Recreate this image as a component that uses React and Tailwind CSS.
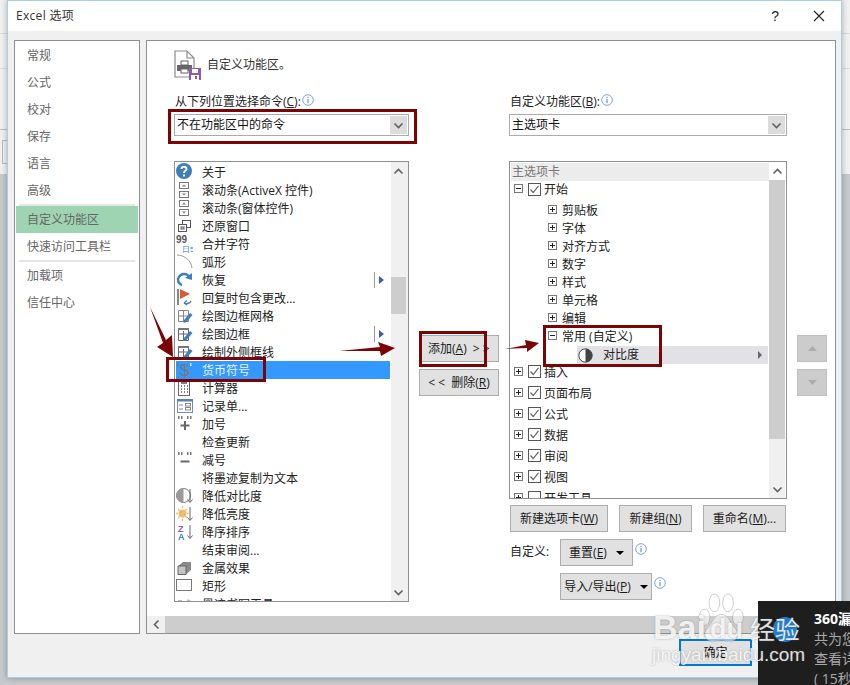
import React from 'react';

const Svg = ({ children, w = 17, h = 18 }) => (
    <svg width={w} height={h} viewBox={`0 0 ${w} ${h}`} className="block shrink-0">{children}</svg>
);

const Spin = () => (
    <g fill="none" stroke="#777">
        <rect x="3.5" y="1.5" width="9" height="6" />
        <rect x="3.5" y="10.5" width="9" height="6" />
        <path d="M6 5.5 L8 3.5 L10 5.5 Z M6 12.5 L8 14.5 L10 12.5 Z" fill="#777" stroke="none" />
    </g>
);

const Pencil = () => <path d="M8 13 L14 6 L16.5 8 L10.5 15 L7.5 16 Z" fill="#3f7fbf" />;

const Quotes = () => (
    <g fill="#777">
        <rect x="2" y="1" width="1.5" height="3" /><rect x="5" y="1" width="1.5" height="3" />
        <rect x="11" y="1" width="1.5" height="3" /><rect x="14" y="1" width="1.5" height="3" />
    </g>
);

const DownArrow = () => <path d="M14 2 V15 M11.5 12.5 L14 15.5 L16.5 12.5" fill="none" stroke="#666" />;

const icons = {
    about: <Svg><circle cx="8" cy="8" r="8" fill="#3f7fb8" /><path d="M5.5 6 C5.5 3 10.5 3 10.5 6 C10.5 8 8 7.5 8 10" fill="none" stroke="#fff" strokeWidth="2" /><rect x="7" y="11.5" width="2" height="2" fill="#fff" /></Svg>,
    spin: <Svg><Spin /></Svg>,
    restore: <Svg><g fill="none" stroke="#555"><rect x="6.5" y="3.5" width="8" height="7" /><rect x="2.5" y="7.5" width="8" height="7" fill="#fff" /><rect x="5" y="10" width="3" height="2" /></g></Svg>,
    merge: <Svg><text x="0" y="8" fontSize="10" fill="#555" fontFamily="Liberation Sans" fontWeight="700">99</text><text x="6" y="17" fontSize="8" fill="#3f7fb8" fontFamily="Liberation Sans">日5</text></Svg>,
    arc: <Svg><path d="M1 2 C8 2 15 7 16 15" fill="none" stroke="#999" /></Svg>,
    redo: <Svg><path d="M14 7 C11 1 4 2 2 8 C2 11 3 13 6 14" fill="none" stroke="#3f7fb8" strokeWidth="2.4" /><path d="M9 7 L16 9 L16 2 Z" fill="#3f7fb8" /></Svg>,
    flag: <Svg><rect x="1" y="0" width="2" height="16" fill="#888" /><path d="M4 0 L14 5 L4 10 Z" fill="#d8593c" /><path d="M15 12 C14 15 10 15 8 14 M8 14 L11 11.5 M8 14 L11 16" fill="none" stroke="#3f7fb8" strokeWidth="1.3" /></Svg>,
    grid: <Svg><path d="M2.5 3.5 H12.5 V14.5 H2.5 Z M7.5 3.5 V14.5 M2.5 9 H12.5" fill="none" stroke="#888" /><Pencil /></Svg>,
    frame: <Svg><path d="M2.5 3.5 H12.5 V15.5 H2.5 Z M7.5 6 V15.5 M2.5 9 H12.5" fill="none" stroke="#666" /><rect x="2" y="3" width="11" height="2" fill="#777" /><Pencil /></Svg>,
    dollar: <Svg><text x="4" y="15" fontSize="17" fill="#777" fontFamily="Liberation Sans">$</text><rect x="1" y="2" width="1.5" height="3" fill="#777" /><rect x="14" y="2" width="1.5" height="3" fill="#cfe4fb" /></Svg>,
    calc: <Svg><rect x="2.5" y="1.5" width="11" height="15" fill="none" stroke="#666" /><path d="M5 4H11M5 7H6M8 7H9M11 7H12M5 10H6M8 10H9M11 10H12M5 13H6M8 13H9M11 13H12" stroke="#555" strokeWidth="1.5" /></Svg>,
    form: <Svg><rect x="1.5" y="2.5" width="15" height="13" fill="#fff" stroke="#7a8aa0" /><rect x="1" y="2" width="16" height="2.5" fill="#5b7fb0" /><path d="M3 8H7M3 12H7" stroke="#888" /><rect x="9.5" y="6.5" width="5" height="2.5" fill="none" stroke="#888" /><rect x="9.5" y="10.5" width="5" height="2.5" fill="none" stroke="#888" /></Svg>,
    plus: <Svg><Quotes /><path d="M9 6 V15 M4.5 10.5 H13.5" stroke="#666" strokeWidth="2" /></Svg>,
    minus: <Svg><Quotes /><path d="M4.5 10.5 H13.5" stroke="#666" strokeWidth="2" /></Svg>,
    contrast: <Svg><circle cx="7.5" cy="8.5" r="7" fill="#fff" stroke="#777" /><path d="M7.5 1.5 A7 7 0 0 0 7.5 15.5 Z" fill="#9a9a9a" /><DownArrow /></Svg>,
    bright: <Svg><circle cx="6.5" cy="8.5" r="4" fill="#eebb70" /><path d="M6.5 1V3M6.5 14V16M0 8.5H2M11 8.5H12.5M2 4L3.5 5.5M11 4L9.5 5.5M2 13L3.5 11.5M11 13L9.5 11.5" stroke="#eebb70" strokeWidth="1.3" /><DownArrow /></Svg>,
    sort: <Svg><text x="2" y="8.5" fontSize="9" fill="#8a5cb0" fontFamily="Liberation Sans" fontWeight="700">Z</text><text x="2" y="17" fontSize="9" fill="#3f7fb8" fontFamily="Liberation Sans" fontWeight="700">A</text><DownArrow /></Svg>,
    metal: <Svg><path d="M2 7 L7 3 H15 V11 L10 15.5 H2 Z" fill="#8a8a8a" /><path d="M2 7 H10 V15.5 H2 Z" fill="#c4c4c4" stroke="#666" /></Svg>,
    rect: <Svg><rect x="0.5" y="2.5" width="15" height="11" fill="#fff" stroke="#777" /></Svg>,
    pen: <Svg><path d="M4 16 L12 4 L15 6 L8 16 Z" fill="#bbb" /><path d="M2 6 H6" stroke="#d8593c" /></Svg>,
};

const commands = [
    ['关于', 'about'], ['滚动条(ActiveX 控件)', 'spin'], ['滚动条(窗体控件)', 'spin'], ['还原窗口', 'restore'],
    ['合并字符', 'merge'], ['弧形', 'arc'], ['恢复', 'redo', true], ['回复时包含更改...', 'flag'],
    ['绘图边框网格', 'grid'], ['绘图边框', 'frame', true], ['绘制外侧框线', 'frame'], ['货币符号', 'dollar'],
    ['计算器', 'calc'], ['记录单...', 'form'], ['加号', 'plus'], ['检查更新'], ['减号', 'minus'],
    ['将墨迹复制为文本'], ['降低对比度', 'contrast'], ['降低亮度', 'bright'], ['降序排序', 'sort'],
    ['结束审阅...'], ['金属效果', 'metal'], ['矩形', 'rect'], ['墨迹书写工具', 'pen'],
];

const topItems = ['常规', '公式', '校对', '保存', '语言', '高级'];
const subGroups = ['剪贴板', '字体', '对齐方式', '数字', '样式', '单元格', '编辑'];
const tabs = ['插入', '页面布局', '公式', '数据', '审阅', '视图'];

const Chevron = ({ up }) => (
    <svg width="11" height="7" viewBox="0 0 11 7" className="block">
        <path d={up ? 'M1.5 5.5 L5.5 1.5 L9.5 5.5' : 'M1.5 1.5 L5.5 5.5 L9.5 1.5'} fill="none" stroke="#606060" strokeWidth="1.6" />
    </svg>
);

const Info = () => (
    <svg width="12" height="12" viewBox="0 0 12 12" className="block shrink-0">
        <circle cx="6" cy="6" r="5.3" fill="#fff" stroke="#7ba4dc" />
        <path d="M6 5 V9.2 M6 2.8 V4" stroke="#4f7fc4" />
    </svg>
);

const Expander = ({ open }) => (
    <svg width="9" height="9" viewBox="0 0 9 9" className="block shrink-0 mb-[3px]">
        <rect x="0.5" y="0.5" width="8" height="8" fill="#fff" stroke="#777" />
        <path d={open ? 'M2 4.5H7' : 'M2 4.5H7M4.5 2V7'} stroke="#222" />
    </svg>
);

const Check = ({ on = true }) => (
    <svg width="13" height="13" viewBox="0 0 13 13" className="block shrink-0 mb-[2px]">
        <rect x="0.5" y="0.5" width="12" height="12" fill="#fff" stroke="#555" />
        {on && <path d="M2.5 6.5 L5.2 9.5 L10.5 2.8" fill="none" stroke="#666" strokeWidth="1.2" />}
    </svg>
);

const Caret = () => <span className="inline-block ml-[9px] w-0 h-0 border-x-[4px] border-x-transparent border-t-[4px] border-t-black align-middle" />;

const Btn = ({ className = '', children }) => (
    <div className={`h-[27px] flex items-center justify-center bg-[#e1e1e1] border border-[#adadad] text-[#1a1a1a] whitespace-nowrap ${className}`}>{children}</div>
);

const Select = ({ value }) => (
    <div className="h-[22px] flex border border-[#ababab] bg-white">
        <div className="flex-1 pl-[2px] leading-[19px] text-[#111]">{value}</div>
        <div className="w-[19px] bg-[#dcdcdc] border border-white flex items-center justify-center"><Chevron /></div>
    </div>
);

const MoveBtn = ({ d }) => (
    <div className="h-[27px] flex items-center justify-center bg-[#cccccc] border border-[#c0c0c0]">
        <svg width="9" height="5" viewBox="0 0 9 5"><path d={d} fill="#ababab" /></svg>
    </div>
);

function CommandList() {
    return (
        <div className="h-[441px] flex border border-[#8c8f94] bg-white overflow-hidden">
            <div className="w-[216px] pt-[1px]">
                {commands.map(([label, icon, more]) => {
                    const selected = label === '货币符号';
                    return (
                        <div key={label} className={`h-[18px] flex items-center ml-px w-[214px] text-[#222] ${selected ? 'bg-[#3399ff] text-[#e6f2ff]' : ''}`}>
                            <div className="w-[17px] shrink-0">{icons[icon]}</div>
                            <span className="ml-[9px] flex-1 whitespace-nowrap pt-[2px]">{label}</span>
                            {more && (
                                <div className="flex items-center h-[16px] mr-[3px] pr-[3px] border-l border-[#999] pl-[4px]">
                                    <span className="w-0 h-0 border-y-[4px] border-y-transparent border-l-[5px] border-l-[#3f5f9f]" />
                                </div>
                            )}
                        </div>
                    );
                })}
            </div>
            <div className="flex-1 bg-[#f0f0f0] flex flex-col">
                <div className="h-[18px] w-[15px] flex items-center justify-center"><Chevron up /></div>
                <div className="h-[97px]" />
                <div className="h-[37px] w-[15px] bg-[#cdcdcd]" />
                <div className="flex-1" />
                <div className="h-[18px] w-[15px] flex items-center justify-center"><Chevron /></div>
            </div>
        </div>
    );
}

function RibbonTree() {
    return (
        <div className="h-[338px] flex border border-[#8c8f94] bg-white overflow-hidden">
            <div className="w-[259px] pt-px overflow-hidden">
                <div className="h-[18px] ml-px bg-[#ececec] text-[#777] leading-[18px] pl-px">主选项卡</div>
                <div className="h-[18px] flex items-center pl-[4px]">
                    <Expander open />
                    <div className="ml-[5px]"><Check /></div>
                    <span className="ml-[3px]">开始</span>
                </div>
                <div className="mt-[3px]">
                    {subGroups.map(name => (
                        <div key={name} className="h-[18px] flex items-center pl-[38px]">
                            <Expander />
                            <span className="ml-[5px]">{name}</span>
                        </div>
                    ))}
                    <div className="h-[18px] flex items-center pl-[38px]">
                        <Expander open />
                        <span className="ml-[5px]">常用 (自定义)</span>
                    </div>
                    <div className="h-[18px] ml-[67px] w-[191px] bg-[#e1e1e6] flex items-center">
                        <svg width="15" height="15" viewBox="0 0 15 15" className="ml-px shrink-0">
                            <circle cx="7.5" cy="7.5" r="6.7" fill="#fff" stroke="#444" />
                            <path d="M7.5 .8 A6.7 6.7 0 0 1 7.5 14.2 Z" fill="#444" />
                        </svg>
                        <span className="ml-[10px] flex-1">对比度</span>
                        <span className="mr-[6px] w-0 h-0 border-y-[4px] border-y-transparent border-l-[4px] border-l-[#666]" />
                    </div>
                </div>
                <div className="-mt-[2px]">
                    {tabs.map(name => (
                        <div key={name} className="h-[21px] flex items-center pl-[4px]">
                            <Expander />
                            <div className="ml-[5px]"><Check /></div>
                            <span className="ml-[3px]">{name}</span>
                        </div>
                    ))}
                    <div className="h-[21px] flex items-center pl-[4px]">
                        <Expander />
                        <div className="ml-[5px]"><Check on={false} /></div>
                        <span className="ml-[3px]">开发工具</span>
                    </div>
                </div>
            </div>
            <div className="flex-1 flex flex-col">
                <div className="h-[18px] w-[16px] flex items-center justify-center"><Chevron up /></div>
                <div className="h-[259px] w-[16px] bg-[#cdcdcd]" />
                <div className="flex-1 w-[16px] bg-[#f0f0f0] flex items-end justify-center pb-[5px]"><Chevron /></div>
            </div>
        </div>
    );
}

// red marks the author drew on top of the screenshot
function Annotations() {
    const box = 'absolute border-[3px] border-[#7b0505]';
    return (
        <>
            <div className={`${box} left-[168px] top-[109px] w-[249px] h-[35px]`} />
            <div className={`${box} left-[166px] top-[357px] w-[100px] h-[25px]`} />
            <div className={`${box} left-[419px] top-[331px] w-[68px] h-[36px]`} />
            <div className={`${box} left-[543px] top-[325px] w-[119px] h-[42px]`} />
            <svg className="absolute left-0 top-0" width="850" height="685" viewBox="0 0 850 685">
                <path d="M150 307 L166 340 L172 335 L173 357 L157 347 L163 343 Z" fill="#7b0505" />
                <path d="M339 351 L380 347 L378 342 L395 348 L381 356 L380 351 Z" fill="#7b0505" />
                <path d="M505 349 L526 345 L525 340 L539 343 L527 352 L527 348 Z" fill="#7b0505" />
            </svg>
        </>
    );
}

function Toast() {
    return (
        <div className="absolute left-[758px] top-[601px] w-[92px] h-[84px] bg-[#1e1e1e] pl-[56px] pt-[8px] overflow-hidden text-[14px] leading-[20px] whitespace-nowrap text-[#a8a8a8]">
            <div className="font-bold text-white">360漏洞修复</div>
            <div>共为您修复了</div>
            <div>查看详情</div>
            <div>( 15秒 )</div>
        </div>
    );
}

function Watermark() {
    const wm = '[text-shadow:0_0_2px_rgba(90,90,90,0.5)] text-white/85';
    return (
        <div className="absolute left-[648px] top-[590px] w-[160px] h-[80px] overflow-hidden">
            <svg className="absolute left-[49px] top-[3px]" width="50" height="52" viewBox="0 0 66 58" preserveAspectRatio="none">
                <g fill="rgba(255,255,255,0.55)" stroke="rgba(130,130,130,0.45)">
                    <ellipse cx="10" cy="27" rx="7" ry="9" />
                    <ellipse cx="23" cy="11" rx="7" ry="10" />
                    <ellipse cx="41" cy="11" rx="7" ry="10" />
                    <ellipse cx="54" cy="27" rx="7" ry="9" />
                    <path d="M32 24 C22 24 20 34 13 40 C6 48 14 56 24 54 C30 53 35 53 41 54 C51 56 58 47 51 40 C44 34 42 24 32 24 Z" />
                </g>
            </svg>
            <span className="absolute left-[125px] top-[27px] w-[24px] h-[25px] rounded-full bg-[#1e7fd6]" />
            <span className={`absolute left-[5px] top-[17px] text-[34px] leading-[40px] font-bold font-['Liberation_Sans',sans-serif] ${wm}`}>Bai</span>
            <span className={`absolute left-[62px] top-[23px] text-[27px] leading-[32px] font-bold font-['Liberation_Sans',sans-serif] ${wm}`}>du</span>
            <span className={`absolute left-[102px] top-[22px] text-[25px] leading-[32px] font-['Noto_Sans_CJK_SC',sans-serif] ${wm}`}>经验</span>
            <span className={`absolute left-[4px] top-[53px] text-[19px] leading-[24px] font-['Liberation_Sans',sans-serif] ${wm}`}>jingyan.baidu.com</span>
        </div>
    );
}

export default function App() {
    return (
        <div className="relative w-[850px] h-[685px] overflow-hidden bg-[#c6c9cd] text-[12px] text-[#222] font-['Open_Sans','Noto_Sans_CJK_SC',sans-serif]">
            {/* the Excel sheet behind the dialog */}
            <div className="absolute left-0 right-0 top-0 h-[174px] bg-[#f1f1f1]">
                <div className="absolute left-0 right-0 top-[33px] h-px bg-[#dcdcdc]" />
                <div className="absolute left-0 right-0 top-[68px] h-px bg-[#dcdcdc]" />
                <div className="absolute left-0 right-0 top-[129px] h-px bg-[#bdbdbd]" />
                <div className="absolute left-[2px] top-[140px] w-[10px] h-[24px] border border-[#bbb]" />
            </div>

            <div className="relative ml-[7px] w-[835px] h-[678px] flex flex-col border border-[#a9cdea] bg-[#f0f0f0] shadow-[0_0_6px_rgba(0,0,0,0.3)]">
                <div className="h-[30px] shrink-0 bg-white flex items-center pl-[8px] pr-[16px] text-[#333]">
                    <span className="flex-1 text-[12px] tracking-[0.3px]">Excel 选项</span>
                    <span className="text-[14px] text-[#222] mr-[34px] font-['Liberation_Sans',sans-serif]">?</span>
                    <svg width="12" height="12" viewBox="0 0 12 12"><path d="M1 1 L11 11 M11 1 L1 11" stroke="#222" strokeWidth="1.1" /></svg>
                </div>

                <div className="flex gap-[6px] pl-[6px] pt-[9px]">
                    <div className="w-[126px] h-[594px] border border-[#8c8f94] bg-white pt-px text-[#666]">
                        {topItems.map(item => <div key={item} className="h-[27px] pl-[12px] leading-[27px]">{item}</div>)}
                        <div className="h-[2px] mx-[4px] bg-[#e6e6e6]" />
                        <div className="h-[27px] mx-px pl-[11px] leading-[27px] bg-[#9fd4b2]">自定义功能区</div>
                        <div className="h-[27px] pl-[12px] leading-[27px]">快速访问工具栏</div>
                        <div className="h-[2px] mx-[4px] bg-[#e6e6e6]" />
                        <div className="h-[27px] pl-[12px] leading-[27px]">加载项</div>
                        <div className="h-[27px] pl-[12px] leading-[27px]">信任中心</div>
                    </div>

                    <div className="w-[690px] h-[594px] border border-[#8c8f94] bg-white flex flex-col">
                        <div className="flex-1 pl-[27px] pt-[9px] overflow-hidden">
                            <div className="h-[30px] flex items-center">
                                <svg width="28" height="30" viewBox="0 0 28 30" className="block shrink-0">
                                    <path d="M1 1 H13 L20 8 V27 H1 Z" fill="#fff" stroke="#8a8a8a" strokeWidth="1.2" />
                                    <path d="M13 1 V8 H20" fill="none" stroke="#8a8a8a" strokeWidth="1.2" />
                                    <rect x="7" y="11" width="7" height="4" fill="#fff" stroke="#666" />
                                    <rect x="3" y="15" width="15" height="6" fill="#666" />
                                    <rect x="7" y="19" width="7" height="4" fill="#fff" stroke="#666" />
                                    <rect x="15" y="18" width="12" height="12" fill="#8a5cb0" />
                                    <rect x="18" y="19" width="6" height="4" fill="#fff" />
                                    <rect x="17" y="25" width="8" height="5" fill="#fff" />
                                    <rect x="21" y="26" width="2" height="3" fill="#8a5cb0" />
                                </svg>
                                <span className="ml-[5px] mb-[1px] text-[#333]">自定义功能区。</span>
                            </div>

                            <div className="flex mt-[12px]">
                                <div className="w-[235px]">
                                    <div className="h-[22px] flex items-start leading-[19px] pl-px">
                                        <span>从下列位置选择命令(<u>C</u>):</span>
                                        <div className="ml-px mt-[2px]"><Info /></div>
                                    </div>
                                    <Select value="不在功能区中的命令" />
                                    <div className="mt-[25px]"><CommandList /></div>
                                </div>

                                <div className="w-[80px] ml-[10px] pt-[243px] flex flex-col gap-[7px]">
                                    <Btn className="justify-start pl-[8px]"><span>添加(<u>A</u>)</span><span className="ml-[6px]">&gt; &gt;</span></Btn>
                                    <Btn><span>&lt; &lt;&nbsp; 删除(<u>R</u>)</span></Btn>
                                </div>

                                <div className="w-[278px] ml-[10px]">
                                    <div className="h-[22px] flex items-start leading-[19px] pl-px">
                                        <span>自定义功能区(<u>B</u>):</span>
                                        <div className="ml-px mt-[2px]"><Info /></div>
                                    </div>
                                    <Select value="主选项卡" />
                                    <div className="mt-[25px]"><RibbonTree /></div>
                                    <div className="flex gap-[11px] pl-px mt-[6px]">
                                        <Btn className="w-[98px]"><span>新建选项卡(<u>W</u>)</span></Btn>
                                        <Btn className="w-[73px]"><span>新建组(<u>N</u>)</span></Btn>
                                        <Btn className="w-[83px]"><span>重命名(<u>M</u>)...</span></Btn>
                                    </div>
                                    <div className="flex pl-px mt-[7px]">
                                        <span className="w-[50px] leading-[25px]">自定义:</span>
                                        <Btn className="w-[73px]"><span>重置(<u>E</u>)</span><Caret /></Btn>
                                        <div className="ml-[2px] mt-[4px]"><Info /></div>
                                    </div>
                                    <div className="flex pl-[51px] mt-[7px]">
                                        <Btn className="w-[92px]"><span>导入/导出(<u>P</u>)</span><Caret /></Btn>
                                        <div className="ml-[2px] mt-[4px]"><Info /></div>
                                    </div>
                                </div>

                                <div className="w-[30px] ml-[10px] pt-[243px] flex flex-col gap-[7px]">
                                    <MoveBtn d="M0 5 L4.5 0 L9 5 Z" />
                                    <MoveBtn d="M0 0 L9 0 L4.5 5 Z" />
                                </div>
                            </div>
                        </div>

                        <div className="h-[17px] shrink-0 flex">
                            <div className="w-[18px] bg-[#f0f0f0] flex items-center justify-center">
                                <svg width="7" height="11" viewBox="0 0 7 11"><path d="M5.5 1.5 L1.5 5.5 L5.5 9.5" fill="none" stroke="#606060" strokeWidth="1.6" /></svg>
                            </div>
                            <div className="flex-1 bg-[#cdcdcd]" />
                        </div>
                    </div>
                </div>

                <div className="flex justify-end pt-[5px] pr-[89px]">
                    <div className="w-[73px] h-[27px] flex items-center justify-center bg-[#e1e1e1] border-2 border-[#0078d7] text-[#111]">确定</div>
                </div>
            </div>

            <Annotations />
            <Toast />
            <Watermark />
        </div>
    );
}
